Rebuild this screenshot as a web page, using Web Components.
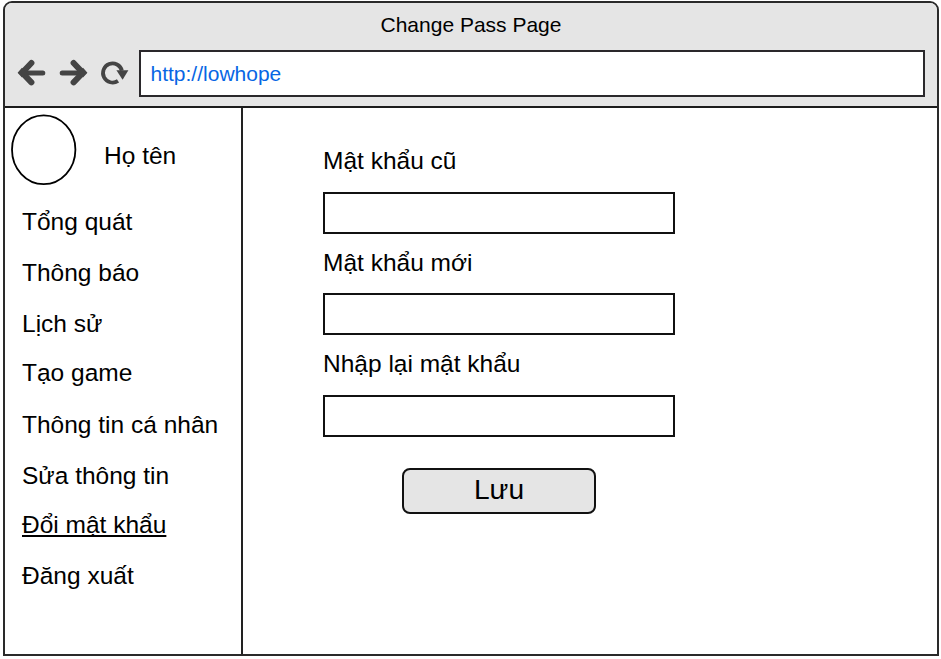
<!DOCTYPE html>
<html lang="vi">
<head>
<meta charset="utf-8">
<title>Change Pass Page</title>
<style>
body{margin:0;background:#fff;width:941px;height:659px;overflow:hidden;font-family:"Liberation Sans",Arial,sans-serif;color:#000}
</style>
</head>
<body>
<browser-window page-title="Change Pass Page" url="http://lowhope">
  <side-panel slot="side" name="Họ tên">
    <menu-item style="--h:51px">Tổng quát</menu-item>
    <menu-item style="--h:51px">Thông báo</menu-item>
    <menu-item style="--h:49px">Lịch sử</menu-item>
    <menu-item style="--h:52px">Tạo game</menu-item>
    <menu-item style="--h:51px">Thông tin cá nhân</menu-item>
    <menu-item style="--h:49px">Sửa thông tin</menu-item>
    <menu-item style="--h:51px" active>Đổi mật khẩu</menu-item>
    <menu-item style="--h:51px">Đăng xuất</menu-item>
  </side-panel>
  <password-form>
    <text-field style="--gap:17px">Mật khẩu cũ</text-field>
    <text-field style="--gap:16px">Mật khẩu mới</text-field>
    <text-field style="--gap:17px">Nhập lại mật khẩu</text-field>
    <save-button slot="action">Lưu</save-button>
  </password-form>
</browser-window>
<script>
const define = (name, render) => customElements.define(name, class extends HTMLElement {
  constructor() { super(); this.attachShadow({ mode: 'open' }); }
  connectedCallback() {
    this.shadowRoot.innerHTML = '<style>*{box-sizing:border-box}</style>' + render(this);
  }
});

define('nav-icons', () => `
<style>:host{display:block;width:135px;height:46px;flex:none}svg{display:block}</style>
<svg width="135" height="46" viewBox="4 50 135 46" fill="none" stroke="#444" stroke-linecap="round">
  <path d="M23 73H42.8" stroke-width="5"/>
  <path d="M31.4 63L22.2 72.8L31.4 82.4" stroke-width="6"/>
  <path d="M17.6 72.7L22 67.8L27 72.7L22 77.6Z" fill="#444" stroke="none"/>
  <path d="M62.2 73H82" stroke-width="5"/>
  <path d="M73.6 63L82.8 72.8L73.6 82.4" stroke-width="6"/>
  <path d="M87.4 72.7L83 67.8L78 72.7L83 77.6Z" fill="#444" stroke="none"/>
  <path d="M118 80.9A9.6 9.6 0 1 1 121.9 70.6" stroke-width="3.8" stroke-linecap="butt"/>
  <path d="M116.4 70.3H128.4L122.6 79.7Z" fill="#444" stroke="none"/>
</svg>`);

define('address-bar', () => `
<style>
:host{display:flex;align-items:center;box-sizing:border-box;width:786px;height:47px;border:2px solid #2a282b;background:#fff;
 padding:1px 0 0 9.5px;font-size:21px;line-height:24px;color:#0866e4}
</style><slot></slot>`);

define('browser-window', el => `
<style>
:host{display:block;padding:1px 0 0 3px}
.frame{width:936px;height:655px;border:2px solid #2a2a2a;border-radius:9px 9px 0 0;background:#fff;overflow:hidden}
header{height:105px;background:#e5e5e5;border-bottom:2px solid #1c1c1c}
.title{height:47px;padding-top:10px;line-height:24px;font-size:21px;text-align:center}
.bar{display:flex}
nav-icons{margin-left:-1px}
main{display:flex;height:546px}
</style>
<div class="frame">
 <header><div class="title">${el.getAttribute('page-title')}</div>
 <div class="bar"><nav-icons></nav-icons><address-bar>${el.getAttribute('url')}</address-bar></div></header>
 <main><slot name="side"></slot><slot></slot></main>
</div>`);

define('side-panel', el => `
<style>
:host{display:block;box-sizing:border-box;flex:none;width:238px;height:546px;border-right:2px solid #222}
.user{display:flex;height:100px;padding:6px 0 0 6px}
svg{display:block;flex:none}
.name{padding:28px 0 0 27px;font-size:24.5px;line-height:28px}
</style>
<div class="user">
 <svg width="66" height="72" viewBox="11 114 66 72"><ellipse cx="43.7" cy="149.8" rx="31.7" ry="34.4" fill="#fff" stroke="#000" stroke-width="1.8"/></svg>
 <span class="name">${el.getAttribute('name')}</span>
</div>
<slot></slot>`);

define('menu-item', () => `
<style>
:host{display:block;height:var(--h);padding-left:17px;box-sizing:border-box;font-size:24.5px;line-height:28px;white-space:nowrap}
:host([active]){text-decoration:underline;text-decoration-thickness:2px;text-underline-offset:2px;text-decoration-skip-ink:none}
</style><slot></slot>`);

define('password-form', () => `
<style>
:host{display:block;padding:39px 0 0 80px;width:432px;box-sizing:border-box}
.action{display:flex;justify-content:center;padding-top:16px}
</style>
<slot></slot><div class="action"><slot name="action"></slot></div>`);

define('text-field', () => `
<style>
:host{display:block}
.label{height:28px;font-size:24.5px;line-height:28px;margin-bottom:var(--gap)}
input{display:block;width:352px;height:42px;border:2px solid #111;background:#fff;border-radius:0;padding:0 8px;margin-bottom:15px;font:24.5px "Liberation Sans",sans-serif}
</style>
<div class="label"><slot></slot></div><input type="password">`);

define('save-button', () => `
<style>
:host{display:block}
button{display:block;width:194px;height:46px;border:2px solid #111;border-radius:8px;background:#e5e5e5;color:#000;padding:0 0 3px;font:28.1px/32px "Liberation Sans",sans-serif}
</style><button><slot></slot></button>`);
</script>
</body>
</html>
